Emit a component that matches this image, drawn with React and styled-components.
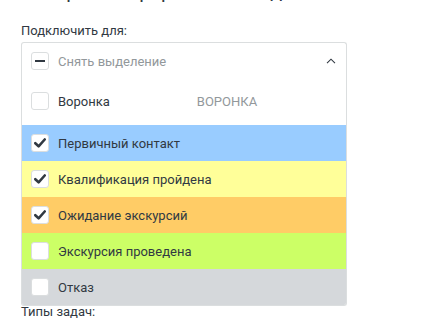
import React from 'react';
import styled, { createGlobalStyle } from 'styled-components';

const Global = createGlobalStyle`
  html, body { margin: 0; padding: 0; background: #fff; }
  body { font-family: Roboto, "Noto Sans", sans-serif; color: #313942; overflow: hidden; }
`;

const Page = styled.div`
  padding: 0 21px;
  width: 326px;
`;

const Heading = styled.h2`
  margin: -21px 0 0;
  font-size: 20px;
  line-height: 24px;
  font-weight: 400;
  color: #313942;
  white-space: nowrap;
`;

const FieldLabel = styled.div`
  font-size: 13px;
  line-height: 18px;
  color: #313942;
  margin-top: ${(p) => p.$top || 0}px;
`;

const Select = styled.div`
  position: relative;
  margin-top: 2px;
`;

const Control = styled.div`
  display: flex;
  align-items: center;
  gap: 9px;
  height: 36px;
  padding: 0 10px 0 9px;
  border: 1px solid #dbdedf;
  border-bottom: none;
  border-radius: 3px 3px 0 0;
  background: #fff;
`;

const Placeholder = styled.span`
  flex: 1;
  font-size: 13px;
  color: #92989b;
`;

const Dropdown = styled.div`
  position: absolute;
  left: 0;
  right: 0;
  top: 100%;
  padding-top: 4px;
  background: #fff;
  border: 1px solid #dbdedf;
  border-top: none;
  border-radius: 0 0 3px 3px;
  overflow: hidden;
  z-index: 2;
`;

const Row = styled.div`
  display: flex;
  align-items: center;
  gap: 9px;
  height: 36px;
  background: ${(p) => p.$bg || '#fff'};
  margin: 0 -1px;
  padding-left: 10px;
  margin-bottom: ${(p) => p.$gap || 0}px;
`;

const RowText = styled.span`
  font-size: 13px;
  color: #313942;
  white-space: nowrap;
`;

const GroupText = styled.span`
  font-size: 13px;
  color: #92989b;
  text-transform: uppercase;
  margin-left: 78px;
`;

const Box = styled.span`
  flex: none;
  width: 18px;
  height: 18px;
  box-sizing: border-box;
  border: 1px solid #dbdedf;
  border-radius: 3px;
  background: #fff;
  display: flex;
  align-items: center;
  justify-content: center;
`;

const Check = () => (
  <svg width="12" height="10" viewBox="0 0 12 10">
    <path d="M1.3 5.2 L4.6 8.3 L10.7 1.5" fill="none" stroke="#313942" strokeWidth="2.6" strokeLinecap="round" strokeLinejoin="round" />
  </svg>
);

const Dash = () => (
  <svg width="12" height="4" viewBox="0 0 12 4">
    <rect x="1" y="1" width="10" height="2" fill="#313942" />
  </svg>
);

const Chevron = () => (
  <svg width="10" height="6" viewBox="0 0 10 6">
    <path d="M1 5.2 L5 1.2 L9 5.2" fill="none" stroke="#313942" strokeWidth="1.1" />
  </svg>
);

const statuses = [
  { name: 'Первичный контакт', color: '#99ccff', checked: true },
  { name: 'Квалификация пройдена', color: '#ffff99', checked: true },
  { name: 'Ожидание экскурсий', color: '#ffcc66', checked: true },
  { name: 'Экскурсия проведена', color: '#ccff66', checked: false },
  { name: 'Отказ', color: '#d5d8db', checked: false },
];

export default function App() {
  return (
    <Page>
      <Global />
      <Heading>Настройки прерывания задач</Heading>
      <FieldLabel $top={19}>Подключить для:</FieldLabel>
      <Select>
        <Control>
          <Box><Dash /></Box>
          <Placeholder>Снять выделение</Placeholder>
          <Chevron />
        </Control>
        <Dropdown>
          <Row $gap={6}>
            <Box />
            <RowText>Воронка</RowText>
            <GroupText>Воронка</GroupText>
          </Row>
          {statuses.map((s) => (
            <Row key={s.name} $bg={s.color}>
              <Box>{s.checked && <Check />}</Box>
              <RowText>{s.name}</RowText>
            </Row>
          ))}
        </Dropdown>
      </Select>
      <FieldLabel $top={224}>Типы задач:</FieldLabel>
    </Page>
  );
}
